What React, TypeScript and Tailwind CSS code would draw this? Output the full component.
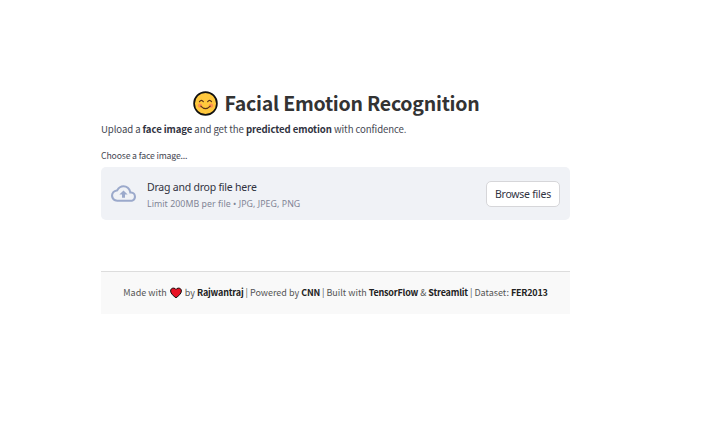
function SmileIcon() {
  return (
    <svg className="h-[25px] w-[25px] shrink-0" viewBox="0 0 25 25" fill="none">
      <circle cx="12.5" cy="12.5" r="11.4" fill="#ffc83d" stroke="#111" strokeWidth="1.7" />
      <circle cx="7" cy="14.6" r="2.2" fill="#ff9150" />
      <circle cx="18" cy="14.6" r="2.2" fill="#ff9150" />
      <path d="M6.500 10.700q1.900-2.600 3.800 0M14.700 10.700q1.900-2.600 3.800 0M7.800 15.200q4.700 5 9.400 0" stroke="#5a3218" strokeWidth="1.200" strokeLinecap="round" />
    </svg>
  );
}

function HeartIcon() {
  return (
    <svg className="mx-[3px] h-[12px] w-[12px] shrink-0" viewBox="0 0 12 12">
      <path d="M6 10.8C3.400 8.900.6 6.600.6 4 .6 2.200 1.800 1.100 3.400 1.100 4.600 1.100 5.500 1.600 6 2.500 6.500 1.600 7.400 1.100 8.600 1.100c1.600 0 2.800 1.100 2.800 2.900C11.400 6.600 8.600 8.900 6 10.800z" fill="#e81224" stroke="#111" strokeWidth="1" />
    </svg>
  );
}

function CloudIcon() {
  return (
    <svg className="h-[25px] w-[25px] shrink-0" viewBox="0 0 24 24" fill="#9ba9cb">
      <path d="M19.350 10.040A7.490 7.490 0 0 0 12 4C9.110 4 6.600 5.640 5.350 8.040A5.994 5.994 0 0 0 0 14c0 3.310 2.690 6 6 6h13c2.760 0 5-2.240 5-5 0-2.640-2.050-4.780-4.650-4.960zM19 18H6c-2.210 0-4-1.790-4-4 0-2.050 1.530-3.760 3.560-3.970l1.070-.11.500-.95A5.469 5.469 0 0 1 12 6c2.620 0 4.880 1.860 5.390 4.430l.3 1.500 1.530.11A2.980 2.980 0 0 1 22 15c0 1.650-1.350 3-3 3zM8 13h2.550v3h2.900v-3H16l-4-4z" />
    </svg>
  );
}

export default function App() {
  return (
    <main className="flex h-[426px] w-[702px] flex-col bg-white pl-[101px] pt-[87px] font-['Noto_Sans_CJK_SC',sans-serif] text-[#31333f]">
      <div className="flex w-[469px] flex-col">
        <h1 className="flex h-[32px] items-center justify-center gap-[6px] whitespace-nowrap pl-[2px] text-[19.5px] font-bold leading-[32px] tracking-[-0.24px] text-[#333]">
          <SmileIcon />
          <span>Facial Emotion Recognition</span>
        </h1>
        <p className="mt-[2px] h-[17px] whitespace-nowrap text-[9.6px] leading-[17px] tracking-[-0.08px] text-[#454752]">
          Upload a <b className="text-[#31333f]">face image</b> and get the <b className="text-[#31333f]">predicted emotion</b> with confidence.
        </p>
        <p className="mt-[10px] h-[16px] whitespace-nowrap text-[8.700px] leading-[16px] tracking-[-0.15px] text-[#454752]">Choose a face image...</p>
        <section className="mt-[3px] flex h-[53px] items-center rounded-[5px] bg-[#f0f2f6] px-[10px] font-['Noto_Sans',sans-serif]">
          <CloudIcon />
          <div className="ml-[11px] flex flex-col whitespace-nowrap pt-[2px]">
            <span className="h-[17px] text-[10.500px] leading-[17px] tracking-[-0.22px]">Drag and drop file here</span>
            <span className="h-[15px] text-[8.800px] leading-[16px] tracking-[0.05px] text-[#808495]">Limit 200MB per file • JPG, JPEG, PNG</span>
          </div>
          <button className="ml-auto h-[26px] w-[74px] whitespace-nowrap rounded-[5px] border border-[#d6d6d9] bg-white text-[10.500px] leading-[24px] tracking-[-0.25px]">
            Browse files
          </button>
        </section>
        <footer className="mt-[51px] flex h-[43px] items-center justify-center whitespace-pre border-t border-[#ddd] bg-[#f9f9f9] text-[9px] text-[#555] [&_b]:tracking-[-0.2px] [&_b]:text-[#222]">
          <span>Made with</span>
          <HeartIcon />
          <span>
            by <b>Rajwantraj</b> | Powered by <b>CNN</b> | Built with <b>TensorFlow</b> &amp; <b>Streamlit</b> | Dataset: <b>FER2013</b>
          </span>
        </footer>
      </div>
    </main>
  );
}
